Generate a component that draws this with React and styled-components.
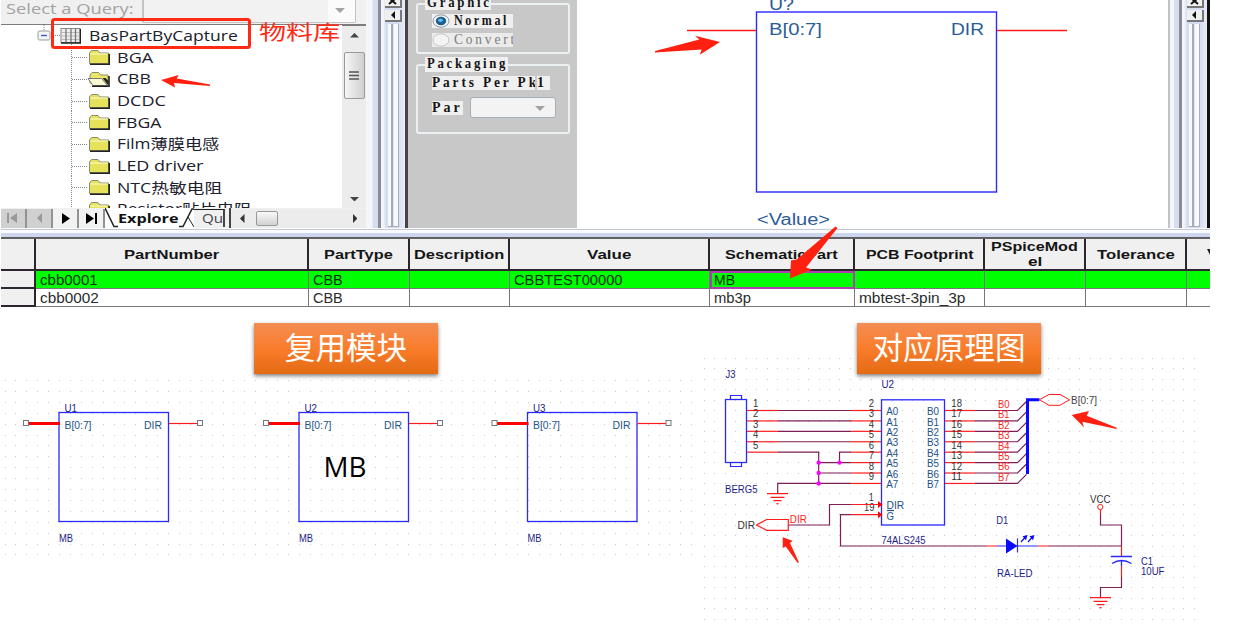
import React, { useLayoutEffect, useRef, useState } from 'react';
import styled, { createGlobalStyle, css } from 'styled-components';

const GlobalStyle = createGlobalStyle`
  body { margin: 0; background: #fff; overflow: hidden; }
  * { box-sizing: border-box; }
  svg { display: block; }
`;

const sans = `"Liberation Sans", "Noto Sans CJK SC", sans-serif`;
const humanist = `"Open Sans", "Noto Sans CJK SC", sans-serif`;

/* ---------- text that is stretched to a given width ---------- */
const FitBox = styled.span`
  display: inline-block;
  flex: none;
  width: ${(p) => p.$w}px;
  white-space: nowrap;
  text-align: left;
`;
const FitInner = styled.span`
  display: inline-block;
  transform-origin: 0 50%;
`;
function Fit({ w, children }) {
  const ref = useRef(null);
  const [scale, setScale] = useState(1);
  useLayoutEffect(() => {
    setScale(w / ref.current.offsetWidth);
  }, [w, children]);
  return (
    <FitBox $w={w}>
      <FitInner ref={ref} style={{ transform: `scaleX(${scale})` }}>{children}</FitInner>
    </FitBox>
  );
}

/* ---------- page ---------- */
const Page = styled.main`
  position: relative;
  width: 1237px;
  height: 625px;
  overflow: hidden;
  background: #fff;
  font-family: ${sans};
`;
const Workspace = styled.section`
  display: flex;
  width: 1209px;
  height: 228px;
  margin-left: 1px;
  overflow: hidden;
`;
const Explorer = styled.div`
  display: flex;
  flex-direction: column;
  width: 365px;
  background: #f0f0f0;
`;
const QueryRow = styled.div`
  display: flex;
  height: 24px;
  padding-left: 5px;
  color: #a2a2a2;
  font: 14px/18px ${humanist};
`;
const QueryCombo = styled.div`
  display: flex;
  justify-content: flex-end;
  width: 214px;
  height: 23px;
  margin-left: 9px;
  border: solid #c4c4c4;
  border-width: 0 1px 1px 2px;
  border-radius: 0 0 2px 2px;
  background: #f2f2f2;
`;
const ComboArrow = styled.div`
  display: flex;
  align-items: center;
  justify-content: center;
  width: 27px;
  padding: ${(p) => p.$drop || 0}px 4px 2px 0;
  background: ${(p) => p.$bg || '#fff'};
`;
const TreeArea = styled.div`
  display: flex;
  height: 184px;
  border-top: 2px solid #7c7c7c;
`;
const Tree = styled.div`
  flex: 1;
  overflow: hidden;
  margin-top: -1px;
  background: #fff;
  color: #20202c;
  font: 14px/21.6px ${humanist};
`;
const TreeRow = styled.div`
  display: flex;
  align-items: center;
  height: 21.65px;
  padding-left: ${(p) => (p.$root ? 36 : 70)}px;
  svg { flex: none; margin-right: ${(p) => (p.$root ? 8 : 5.5)}px; }
`;
const VScroll = styled.div`
  display: flex;
  flex-direction: column;
  align-items: center;
  justify-content: space-between;
  width: 24px;
  padding: 7px 0 7px;
  background: #ececec;
`;
const VThumb = styled.div`
  display: flex;
  align-items: center;
  justify-content: center;
  width: 21px;
  height: 47px;
  margin: 0 0 84px;
  border: 1px solid #999;
  border-radius: 2px;
  background: linear-gradient(90deg, #f6f6f6, #dedede 60%, #cfcfcf);
`;
const TabBar = styled.div`
  display: flex;
  align-items: center;
  height: 20px;
  color: #111;
  font: 700 13px/19px ${humanist};
`;
const NavButton = styled.div`
  display: flex;
  align-items: center;
  justify-content: center;
  width: 26px;
  height: 19px;
  border-right: 2px solid #929292;
  background: ${(p) => (p.$off ? '#d0d0d0' : '#f2f2f2')};
`;
const Tabs = styled.div`
  display: flex;
  align-items: center;
  width: 126px;
  height: 20px;
  border-right: 2px solid #444;
`;
const ExploreTab = styled.div`
  display: flex;
  flex: none;
  align-items: center;
  width: 89px;
  height: 20px;
  background: #fff;
  svg { flex: none; }
`;
const QueryTab = styled.div`
  display: flex;
  width: 31px;
  height: 18px;
  padding-left: 8px;
  overflow: hidden;
  border-top: 1px solid #222;
  border-right: 2px solid #444;
  color: #444;
  font-weight: 400;
  line-height: 17px;
`;
const HScroll = styled.div`
  display: flex;
  flex: 1;
  align-items: center;
  justify-content: space-between;
  height: 19px;
  padding: 0 9px 0 9px;
  background: #ececec;
`;
const HThumb = styled.div`
  width: 22px;
  height: 15px;
  margin: 0 64px 0 0;
  border: 1px solid #999;
  border-radius: 2px;
  background: linear-gradient(#f8f8f8, #d2d2d2);
`;
const PaneEdge = styled.div`
  width: ${(p) => p.$w}px;
  border-right: 3px solid #898c90;
  background: linear-gradient(90deg, ${(p) => (p.$line ? '#c2c2c6 0 2px,' : '')} #f5f6fb ${(p) => (p.$line ? '2px' : '0')} 50%, #d6ddf2 60%);
`;
const DockBar = styled.div`
  display: flex;
  flex-direction: column;
  align-items: center;
  width: ${(p) => p.$w}px;
  border-right: 3px solid ${(p) => p.$edge};
  background: linear-gradient(90deg, #f4f6fc 0 2px, #d4dcf0 5px, #d4dcf0 70%, #e8edfa);
`;
const DockButton = styled.div`
  display: flex;
  flex: none;
  align-items: center;
  justify-content: center;
  width: 17px;
  height: ${(p) => p.$h}px;
  margin: 0 0 2px 1px;
  border: solid #777;
  border-width: 0 2px 2px 0;
  background: #f0f0f0;
  overflow: hidden;
`;
const Grip = styled.div`
  width: 11px;
  height: 203px;
  border: solid #aaaeba;
  border-width: 0 1.5px 1px 0;
  background: linear-gradient(90deg, #f8f9fd 0 3px, #a7abb8 3px 5px, #dfe4f3 5px 6px, #f8f9fd 6px);
`;

/* ---------- part options ---------- */
const Options = styled.div`
  width: 169px;
  padding: 3px 7px 0 8px;
  background: #c8c8c8;
  color: #161616;
  font: 700 14px/14px "Liberation Serif", "DejaVu Serif", serif;
  letter-spacing: 3px;
`;
const Group = styled.div`
  display: flex;
  flex-direction: column;
  align-items: flex-start;
  height: ${(p) => p.$h}px;
  margin-bottom: 10px;
  padding-left: 14px;
  border: 2px solid #ebf0f3;
  border-radius: 3px;
`;
const GroupTitle = styled.div`
  width: ${(p) => p.$w}px;
  height: 15px;
  margin: -9px 0 ${(p) => p.$gap}px -7px;
  padding-left: 2px;
  background: #f0f0f0;
`;
const RadioRow = styled.div`
  display: flex;
  align-items: center;
  gap: 4px;
  width: 81px;
  height: 16px;
  margin-bottom: 5px;
  overflow: hidden;
  background: ${(p) => (p.$off ? '#ebebeb' : '#f0f0f0')};
  color: ${(p) => (p.$off ? '#7c7c7c' : '#161616')};
  font-weight: ${(p) => (p.$off ? 400 : 700)};
  svg { flex: none; }
`;
const FieldRow = styled.div`
  display: flex;
  align-items: center;
  gap: ${(p) => p.$gap}px;
  height: ${(p) => p.$h}px;
  margin-bottom: 7px;
`;
const FieldText = styled.div`
  width: ${(p) => p.$w}px;
  height: 14px;
  overflow: hidden;
  background: #f0f0f0;
`;
const PartCombo = styled.div`
  display: flex;
  justify-content: flex-end;
  width: 86px;
  height: 21px;
  border: 1px solid #a5afb8;
  border-radius: 3px;
  background: #f3f3f3;
`;

/* ---------- parts table ---------- */
const Divider = styled.div`
  width: 1209px;
  height: 11px;
  margin-left: 1px;
  background: linear-gradient(#fafbfe 0 1px, #c6c9d4 1px 2px, #fafbfe 2px 5px, #cdd6ec 5px 9px, #5f5f64 9px);
`;
const PartsTable = styled.div`
  display: grid;
  grid-template-columns: 35px 273px 101px 100px 200px 145px 130px 101px 101px 23px;
  grid-template-rows: 32px 18px 18px;
  width: 1209px;
  margin-left: 1px;
`;
const HeadCell = styled.div`
  display: flex;
  flex-direction: column;
  align-items: center;
  justify-content: center;
  overflow: hidden;
  border: solid #2c2530;
  border-width: 0 2px 2px 0;
  background: #f0f0f0;
  color: #151515;
  font: 700 13.5px/15px ${sans};
  &:nth-child(10) {
    align-items: flex-end;
    padding: 0 0 5px 0;
    border-right: 0;
  }
`;
const Cell = styled.div`
  display: flex;
  align-items: center;
  padding-left: 4px;
  border: solid #777;
  border-width: 0 1px 1px 0;
  background: ${(p) => (p.$on ? '#00ff00' : '#fff')};
  color: ${(p) => (p.$on ? '#063006' : '#2c2c2c')};
  font: 14px/16px ${sans};
  &:nth-child(10n) { border-right: 0; }
  ${(p) => p.$head && css`
    border-width: 0 2px 2px 0;
    border-color: #2c2530;
    background: #f0f0f0;
  `}
  ${(p) => p.$picked && css`
    border: 2px solid #b23cb4;
    padding-left: 2px;
  `}
`;

/* ---------- diagrams ---------- */
const Diagrams = styled.section`
  display: flex;
  height: 318px;
`;
const Pane = styled.div`
  position: relative;
  width: ${(p) => p.$w}px;
`;
const Banner = styled.div`
  display: flex;
  align-items: center;
  justify-content: center;
  width: 184px;
  height: 51px;
  margin: 16px 0 2px 254px;
  padding-bottom: 5px;
  background: linear-gradient(#f38d55, #fa7d2b 50%, #e46a13);
  box-shadow: 0 2px 4px rgba(0, 0, 0, 0.5);
  color: #fff;
  font: 400 30.6px/44px "Noto Sans CJK SC", sans-serif;
  ${(p) => p.$over && css`
    position: absolute;
    left: 157px;
    top: 16px;
    margin: 0;
  `}
`;
const Annotations = styled.div`
  position: absolute;
  inset: 0;
  pointer-events: none;
`;
const LibraryNote = styled.div`
  position: absolute;
  left: 259px;
  top: 16px;
  color: #ff2a14;
  font: 400 20.5px/30px "Noto Sans CJK SC", sans-serif;
`;

/* ---------- small icons ---------- */
const Tri = ({ dir, s = 4, c = '#222' }) => {
  const d = {
    down: `M0 0H${s * 2}L${s} ${s}Z`,
    up: `M0 ${s}H${s * 2}L${s} 0Z`,
    left: `M${s} 0V${s * 2}L0 ${s}Z`,
    right: `M0 0V${s * 2}L${s} ${s}Z`,
  }[dir];
  const flat = dir === 'up' || dir === 'down';
  return <svg width={flat ? s * 2 : s} height={flat ? s : s * 2}><path d={d} fill={c} /></svg>;
};
const Folder = ({ open }) => (
  <svg width="40" height="22" viewBox="0 0 40 22">
    <path d="M.5 0V22M1 11.500H16" stroke="#888" strokeDasharray="1 1" fill="none" />
    {open ? (
      <>
        <path d="M19 15V7l2-2.500h6.500l2 2.500h7.500v9Z" fill="#e9e66a" stroke="#8c8c6c" />
        <path d="M17 10.500h13.500l6 7H22Z" fill="#fafad2" stroke="#777" />
        <path d="M21 18.200h17V8" stroke="#222" strokeWidth="1.600" fill="none" />
        <path d="M31.500 10l6 7.500V13l-3-3Z" fill="#222" />
      </>
    ) : (
      <>
        <path d="M18.500 17.500V7l2-2.500h6.500l2 2.500h8.500v10.500Z" fill="#e6e25c" stroke="#8c8c6c" />
        <path d="M19.500 8h17" stroke="#fdfdd8" />
        <path d="M19 18.200h19.200V8" stroke="#222" strokeWidth="1.600" fill="none" />
      </>
    )}
  </svg>
);
const LibraryIcon = () => (
  <svg width="44" height="21.600" viewBox="0 0 44 21.6">
    <path d="M7 0v6M14 10.500h9M34.500 19v3" stroke="#888" strokeDasharray="1 1" />
    <rect x="1" y="6" width="12" height="9" rx="1.500" fill="#f4f4f4" stroke="#999" />
    <path d="M4 10.500h6" stroke="#3b5fc0" strokeWidth="1.400" />
    <rect x="24" y="3.500" width="19" height="14" fill="#eee" stroke="#888" />
    <path d="M24 7.500h19M24 11h19M24 14.500h19" stroke="#bbb" />
    <path d="M29 4v14M34 4v14M38.500 4v14" stroke="#777" strokeWidth="1.300" />
    <path d="M24 18h19.500V4" stroke="#222" strokeWidth="1.600" fill="none" />
  </svg>
);
const Radio = ({ on }) => (
  <svg width="18" height="14" viewBox="0 0 18 14">
    <ellipse cx="9" cy="7" rx="8" ry="6.200" fill="#f4f4f4" stroke={on ? '#8b98a2' : '#c4c4c4'} />
    {on && <ellipse cx="9" cy="7" rx="5.200" ry="4.200" fill="#1d5f90" />}
    {on && <ellipse cx="8.500" cy="6.300" rx="2.300" ry="1.800" fill="#5cc3ee" />}
  </svg>
);

const folders = [
  ['BGA', 36], ['CBB', 34, true], ['DCDC', 49], ['FBGA', 44], ['Film薄膜电感', 102],
  ['LED driver', 86], ['NTC热敏电阻', 105], ['Resistor贴片电阻', 135],
];
const heads = [
  [], [['PartNumber', 95]], [['PartType', 69]], [['Description', 90]], [['Value', 44]],
  [['SchematicPart', 113]], [['PCB Footprint', 107]], [['PSpiceMod', 87], ['el', 14]], [['Tolerance', 78]],
];
const rows = [
  [null, ['cbb0001', 58], ['CBB', 30], null, ['CBBTEST00000', 109], ['MB', 21], null, null, null, null],
  [null, ['cbb0002', 59], ['CBB', 30], null, null, ['mb3p', 37], ['mbtest-3pin_3p', 107], null, null, null],
];

const Dock = ({ w, edge }) => (
  <DockBar $w={w} $edge={edge}>
    <DockButton $h={8}>
      <svg width="9" height="8"><path d="M1 -1l7 6M8 -1l-7 6" stroke="#111" strokeWidth="2" /></svg>
    </DockButton>
    <DockButton $h={12}><Tri dir="left" s={4} c="#111" /></DockButton>
    <Grip />
  </DockBar>
);

/* ---------- schematic drawing helpers ---------- */
const NAVY = '#1c1c86';
const PIN = '#1d5288';
const BLUE = '#2a2aff';
const RED = '#ff1c1c';
const WIRE = '#7d1f55';

const T = ({ x, y, w, c = NAVY, s = 10.3, end, f, children }) => (
  <text x={end ? x - w : x} y={y} fill={c} fontSize={s} textLength={w} lengthAdjust="spacingAndGlyphs"
    fontFamily={f || '"Liberation Sans", sans-serif'}>{children}</text>
);
const L = ({ d, c = WIRE, w = 1.2 }) => <path d={d} stroke={c} strokeWidth={w} fill="none" />;

const dots = (x0, y0, step, nx, ny) => {
  let d = '';
  for (let j = 0; j <= ny; j += 1) {
    for (let i = 0; i <= nx; i += 1) {
      d += `M${Math.round(x0 + i * step)} ${Math.round(y0 + j * step) + 0.5}h1`;
    }
  }
  return d;
};

const Module = ({ dx, name }) => (
  <g transform={`translate(${dx} 0)`}>
    <T x={64.5} y={412} w={12.5}>{name}</T>
    <rect x="59" y="412.500" width="109.500" height="109" fill="none" stroke={BLUE} strokeWidth="1.300" />
    <L d="M28 423.500H60" c="#ff0000" w={3} />
    <L d="M169 423.500H198" c={RED} />
    <rect x="23.500" y="420.500" width="5" height="5" fill="#fff" stroke="#777" />
    <rect x="197.500" y="420.500" width="5" height="5" fill="#fff" stroke="#777" />
    <T x={64.5} y={428.8} w={27} c={PIN} s={10.8}>B[0:7]</T>
    <T x={162} y={428.8} w={18} c={PIN} s={10.8} end>DIR</T>
    <T x={59} y={541.8} w={14}>MB</T>
  </g>
);

const ys = Array.from({ length: 8 }, (_, i) => 410.5 + i * 10.42);

const Ground = ({ x, y }) => (
  <L d={`M${x - 10.5} ${y}h21M${x - 7} ${y + 3.7}h14M${x - 4} ${y + 7}h8M${x - 1} ${y + 10}h2`} c={RED} w={1.3} />
);

const Circuit = () => (
  <svg width="537" height="318" viewBox="700 307 537 318">
    <path d={dots(704, 358, 10.42, 47, 25)} stroke="#c9c9cf" />
    <T x={725.5} y={377.5} w={10}>J3</T>
    <rect x="725.500" y="399.500" width="21" height="63" fill="none" stroke={BLUE} strokeWidth="1.300" />
    <L d="M730.500 399.500V395.500H741.500V399.500M730.500 462.500V466.500H741.500V462.500" c={BLUE} />
    <T x={725} y={492.5} w={32.5}>BERG5</T>
    {ys.slice(0, 5).map((y, i) => (
      <g key={y}>
        <T x={753} y={y - 3.5} w={5.3} c="#333">{i + 1}</T>
        <L d={`M747 ${y}H778`} c={RED} />
        {i < 4 && <L d={`M778 ${y}H851`} />}
      </g>
    ))}
    {ys.map((y, i) => (
      <g key={y}>
        <T x={868.7} y={y - 3.5} w={5.3} c="#333">{i + 2}</T>
        <L d={`M851 ${y}H881`} c={RED} />
        <T x={886.3} y={y + 4.7} w={12} c={PIN}>{`A${i}`}</T>
        <T x={939} y={y + 4.7} w={12} c={PIN} end>{`B${i}`}</T>
        <L d={`M945 ${y}H975`} c={RED} />
        <T x={951.3} y={y - 3.5} w={10.7} c="#333">{18 - i}</T>
        <L d={`M975 ${y}H1017.500L1026.500 ${y - 9}`} />
        <T x={998} y={y - 2.6} w={11.5} c={RED}>{`B${i}`}</T>
      </g>
    ))}
    <L d={`M778 ${ys[4]}H818.700V${ys[7]}M851 ${ys[4]}H839.500V${ys[5]}M851 ${ys[5]}H818.700M851 ${ys[6]}H818.700M851 ${ys[7]}H777.700V493.500`} />
    {[[818.7, ys[5]], [818.7, ys[6]], [818.7, ys[7]], [839.5, ys[5]]].map(([x, y]) => (
      <circle key={`${x} ${y}`} cx={x} cy={y} r="2.200" fill="#ff00ff" />
    ))}
    <Ground x={777.5} y={493.6} />

    <T x={881.5} y={387.8} w={12.5}>U2</T>
    <rect x="881.500" y="399.800" width="63" height="125.200" fill="none" stroke={BLUE} strokeWidth="1.300" />
    <T x={881.5} y={544} w={44}>74ALS245</T>
    <T x={868.7} y={500.7} w={5} c="#333">1</T>
    <T x={864} y={511.2} w={10.5} c="#333">19</T>
    <T x={886.5} y={509.2} w={17.7} c={PIN}>DIR</T>
    <T x={886.5} y={519.5} w={7.5} c={PIN}>G</T>
    <L d="M887 510.500h7" c={PIN} />
    <L d="M788.500 525H829.500V504.500H851M1049 546H1121.700M986 546H840.500V514.700H851" />
    <L d="M851 504.500H881M851 514.700H881" c={RED} />
    <path d="M878 501l4.500 3.500-4.500 3.500ZM878 511.200l4.500 3.500-4.500 3.500Z" fill="#ff0000" />
    <path d="M756.500 525L766.700 519.500H788.300V530.300H766.700Z" fill="none" stroke={RED} strokeWidth="1.200" />
    <T x={737.5} y={529} w={17.5} c="#333" s={10.8}>DIR</T>
    <T x={789.8} y={522.7} w={17} c={RED} s={10.8}>DIR</T>

    <L d="M1027.500 474V399.800H1039.500" c="#0a0aff" w={3} />
    <path d="M1039.500 399.700L1049 394.500H1060L1069.500 399.700L1060 405.300H1049Z" fill="none" stroke={RED} />
    <T x={1071} y={403.8} w={26} c="#444" s={10.8}>B[0:7]</T>

    <T x={996.3} y={523.7} w={12}>D1</T>
    <T x={997} y={576.9} w={35.5}>RA-LED</T>
    <L d="M986 546H997M1037.500 546H1049" c={RED} />
    <L d="M997 546H1037.500M1017.500 538.500V552.500" c={BLUE} />
    <path d="M1006 538.500V553.500L1017.500 546Z" fill="#0a0aff" />
    <L d="M1021 542l4-4.500M1028 542l4-4.500" c="#0a0aff" />
    <path d="M1027.500 535l-5 1.200 3.500 4ZM1034.500 535l-5 1.200 3.500 4Z" fill="#0a0aff" />

    <T x={1090} y={502.8} w={20.5} c="#333">VCC</T>
    <circle cx="1100.300" cy="507" r="2.600" fill="#fff" stroke={RED} />
    <L d="M1100.500 509.500V514M1121.500 546V556M1121.500 566V577" c={RED} />
    <L d="M1100.500 514V525H1121.500V546M1121.500 577V587.500H1100.500V597.500" />
    <L d="M1111 556.500H1132M1112 563.500Q1121.500 557.500 1131.500 563.500M1121.500 560.500V566" c={BLUE} w={1.3} />
    <Ground x={1100.5} y={597.7} />
    <T x={1141} y={565.2} w={12}>C1</T>
    <T x={1141} y={574.5} w={23.5}>10UF</T>
  </svg>
);

export default function App() {
  return (
    <Page>
      <GlobalStyle />
      <Workspace>
        <Explorer>
          <QueryRow>
            <Fit w={127}>Select a Query:</Fit>
            <QueryCombo><ComboArrow $bg="#fbfbfb"><Tri dir="down" s={5} c="#a2a2a2" /></ComboArrow></QueryCombo>
          </QueryRow>
          <TreeArea>
            <Tree>
              <TreeRow $root><LibraryIcon /><Fit w={149}>BasPartByCapture</Fit></TreeRow>
              {folders.map(([name, w, open]) => (
                <TreeRow key={name}><Folder open={open} /><Fit w={w}>{name}</Fit></TreeRow>
              ))}
            </Tree>
            <VScroll>
              <Tri dir="up" s={4.5} c="#444" />
              <VThumb>
                <svg width="10" height="9"><path d="M0 1h10M0 4.500h10M0 8h10" stroke="#555" strokeWidth="1.300" /></svg>
              </VThumb>
              <Tri dir="down" s={4.5} c="#444" />
            </VScroll>
          </TreeArea>
          <TabBar>
            <NavButton $off>
              <svg width="12" height="10"><path d="M1 0v10" stroke="#999" strokeWidth="2" /><path d="M10 0v10L3 5Z" fill="#999" /></svg>
            </NavButton>
            <NavButton $off><Tri dir="left" s={5} c="#999" /></NavButton>
            <NavButton>
              <svg width="9" height="11"><path d="M1 0v11L9 5.500Z" fill="#000" /></svg>
            </NavButton>
            <NavButton>
              <svg width="12" height="11"><path d="M11 0v11" stroke="#000" strokeWidth="2" /><path d="M1 0v11L9 5.500Z" fill="#000" /></svg>
            </NavButton>
            <Tabs>
              <ExploreTab>
                <svg width="13" height="20"><path d="M0 0L9 18.500H13" stroke="#222" strokeWidth="1.500" fill="none" /></svg>
                <Fit w={61}>Explore</Fit>
                <svg width="15" height="20"><path d="M0 18.500H4L13 1H15" stroke="#222" strokeWidth="1.500" fill="none" /><path d="M9 9l6 10" stroke="#222" /></svg>
              </ExploreTab>
              <QueryTab><Fit w={21}>Qu</Fit></QueryTab>
            </Tabs>
            <HScroll>
              <Tri dir="left" s={4.5} c="#333" /><HThumb /><Tri dir="right" s={4.5} c="#333" />
            </HScroll>
          </TabBar>
        </Explorer>
        <PaneEdge $w={15} />
        <Dock w={27} edge="#444" />
        <Options>
          <Group $h={51}>
            <GroupTitle $w={66} $gap={4}><Fit w={65}>Graphic</Fit></GroupTitle>
            <RadioRow><Radio on /><Fit w={55}>Normal</Fit></RadioRow>
            <RadioRow $off><Radio /><Fit w={63}>Convert</Fit></RadioRow>
          </Group>
          <Group $h={70}>
            <GroupTitle $w={83} $gap={3}><Fit w={81}>Packaging</Fit></GroupTitle>
            <FieldRow $h={15} $gap={2}>
              <FieldText $w={103}><Fit w={107}>Parts Per Pk</Fit></FieldText>
              <FieldText $w={13}>1</FieldText>
            </FieldRow>
            <FieldRow $h={21} $gap={7}>
              <FieldText $w={31}><Fit w={38}>Part</Fit></FieldText>
              <PartCombo><ComboArrow $bg="transparent" $drop={4}><Tri dir="down" s={5} c="#a2a2a2" /></ComboArrow></PartCombo>
            </FieldRow>
          </Group>
        </Options>
        <svg width="591" height="228" viewBox="577 0 591 228">
          <rect x="577" y="0" width="591" height="228" fill="#fff" />
          <T x={769} y={9.500} w={25} c="#2b5c97" s={16}>U?</T>
          <rect x="756.500" y="12" width="240" height="180" fill="none" stroke={BLUE} strokeWidth="1.400" />
          <L d="M687 30.500H756M997 30.500H1067" c={RED} w={1.4} />
          <T x={769} y={35.2} w={53} c="#2b5c97" s={16}>B[0:7]</T>
          <T x={951} y={35.2} w={33} c="#2b5c97" s={16}>DIR</T>
          <T x={757} y={224.700} w={73} c="#2b5c97" s={16}>{'<Value>'}</T>
        </svg>
        <PaneEdge $w={14} $line />
        <Dock w={28} edge="#111" />
      </Workspace>
      <Divider />
      <PartsTable>
        {heads.map((lines, i) => (
          <HeadCell key={i}>{lines.map(([t, w]) => <Fit key={t} w={w}>{t}</Fit>)}</HeadCell>
        ))}
        <HeadCell><svg width="3" height="6"><path d="M0 0H3V6Z" fill="#222" /></svg></HeadCell>
        {rows.map((r, j) => r.map((c, i) => (
          <Cell key={`${j}-${i}`} $on={j === 0 && i > 0} $head={i === 0} $picked={j === 0 && i === 5}>
            {c && <Fit w={c[1]}>{c[0]}</Fit>}
          </Cell>
        )))}
      </PartsTable>
      <Diagrams>
        <Pane $w={700}>
          <Banner>复用模块</Banner>
          <svg width="700" height="249" viewBox="0 376 700 249">
            <path d={dots(4.5, 380, 10.9, 63, 16)} stroke="#c9c9cf" />
            <Module dx={0} name="U1" />
            <Module dx={240} name="U2" />
            <T x={323.5} y={476.5} w={43} c="#000" s={26.5} f={humanist}>MB</T>
            <Module dx={468.5} name="U3" />
          </svg>
        </Pane>
        <Pane $w={537}>
          <Circuit />
          <Banner $over>对应原理图</Banner>
        </Pane>
      </Diagrams>
      <Annotations>
        <svg width="1237" height="625">
          <rect x="52.500" y="19.500" width="197" height="28" rx="2" fill="none" stroke="#ff2a14" strokeWidth="3" />
          <g fill="#ff2010">
            <path d="M161 80L178.700 75L176.700 78.500L210 84.500V86L174 83L175 87.500Z" />
            <path d="M720 42L695 35.700L699.400 39.500L655 51V52.500L701.700 49.500L699.800 54.700Z" />
            <path d="M835.500 226.500L837.500 228L806 267.500L812 269.500L790 278.500L791 260.500L796.700 259.500Z" />
            <path d="M1071.700 415L1089 411L1086.700 415.700L1116.700 427.700V429L1082.300 421.700L1084 427.300Z" />
            <path d="M782.700 537.300L792.500 540.700L790 543L799 562.500L797.500 562.800L785.700 546.500L782.700 548Z" />
          </g>
        </svg>
        <LibraryNote><Fit w={82}>物料库</Fit></LibraryNote>
      </Annotations>
    </Page>
  );
}
